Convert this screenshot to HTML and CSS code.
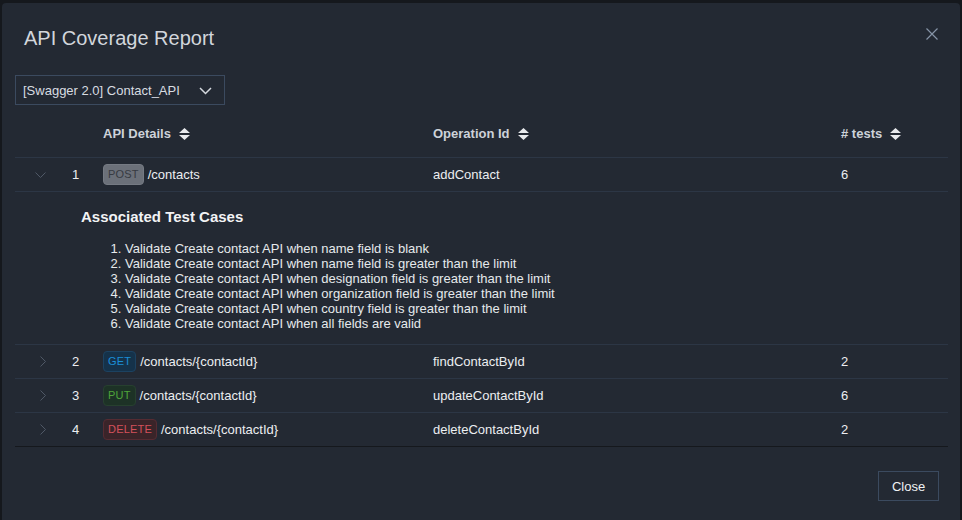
FILE: index.html
```html
<!DOCTYPE html>
<html>
<head>
<meta charset="utf-8">
<link rel="stylesheet" href="styles.css">
</head>
<body>
<div class="modal">
  <div class="modal-header">
    <h1 class="title">API Coverage Report</h1>
    <button class="x-btn" aria-label="close">
      <svg width="12" height="12" viewBox="0 0 12 12"><path d="M0.5 0.5L11.5 11.5M11.5 0.5L0.5 11.5" stroke="#8593a6" stroke-width="1.2" fill="none"/></svg>
    </button>
  </div>
  <div class="modal-body">
    <div class="select">
      <span>[Swagger 2.0] Contact_API</span>
      <svg class="select-chev" width="13" height="8" viewBox="0 0 13 8"><path d="M1 1L6.5 6.5L12 1" stroke="#d5d9df" stroke-width="1.5" fill="none"/></svg>
    </div>

    <div class="table">
      <div class="row head">
        <div class="c1"></div>
        <div class="c2"></div>
        <div class="c3"><span>API Details</span><svg class="sort" width="11" height="12" viewBox="0 0 11 12"><path d="M5.5 0L11 5H0Z M0 7H11L5.5 12Z" fill="#e8eaed"/></svg></div>
        <div class="c4"><span>Operation Id</span><svg class="sort" width="11" height="12" viewBox="0 0 11 12"><path d="M5.5 0L11 5H0Z M0 7H11L5.5 12Z" fill="#e8eaed"/></svg></div>
        <div class="c5"><span># tests</span><svg class="sort" width="11" height="12" viewBox="0 0 11 12"><path d="M5.5 0L11 5H0Z M0 7H11L5.5 12Z" fill="#e8eaed"/></svg></div>
      </div>

      <div class="row">
        <div class="c1"><svg width="11" height="6" viewBox="0 0 11 6"><path d="M0.5 0.5L5.5 5.5L10.5 0.5" stroke="#4f5866" stroke-width="1" fill="none"/></svg></div>
        <div class="c2">1</div>
        <div class="c3"><span class="badge post">POST</span><span>/contacts</span></div>
        <div class="c4">addContact</div>
        <div class="c5">6</div>
      </div>
      <div class="expanded">
        <h2>Associated Test Cases</h2>
        <ol>
          <li>Validate Create contact API when name field is blank</li>
          <li>Validate Create contact API when name field is greater than the limit</li>
          <li>Validate Create contact API when designation field is greater than the limit</li>
          <li>Validate Create contact API when organization field is greater than the limit</li>
          <li>Validate Create contact API when country field is greater than the limit</li>
          <li>Validate Create contact API when all fields are valid</li>
        </ol>
      </div>

      <div class="row">
        <div class="c1 closed"><svg width="6" height="11" viewBox="0 0 6 11"><path d="M0.5 0.5L5.5 5.5L0.5 10.5" stroke="#4f5866" stroke-width="1" fill="none"/></svg></div>
        <div class="c2">2</div>
        <div class="c3"><span class="badge get">GET</span><span>/contacts/{contactId}</span></div>
        <div class="c4">findContactById</div>
        <div class="c5">2</div>
      </div>
      <div class="row">
        <div class="c1 closed"><svg width="6" height="11" viewBox="0 0 6 11"><path d="M0.5 0.5L5.5 5.5L0.5 10.5" stroke="#4f5866" stroke-width="1" fill="none"/></svg></div>
        <div class="c2">3</div>
        <div class="c3"><span class="badge put">PUT</span><span>/contacts/{contactId}</span></div>
        <div class="c4">updateContactById</div>
        <div class="c5">6</div>
      </div>
      <div class="row last">
        <div class="c1 closed"><svg width="6" height="11" viewBox="0 0 6 11"><path d="M0.5 0.5L5.5 5.5L0.5 10.5" stroke="#4f5866" stroke-width="1" fill="none"/></svg></div>
        <div class="c2">4</div>
        <div class="c3"><span class="badge delete">DELETE</span><span>/contacts/{contactId}</span></div>
        <div class="c4">deleteContactById</div>
        <div class="c5">2</div>
      </div>
    </div>
  </div>
  <div class="modal-footer">
    <button class="close-btn">Close</button>
  </div>
</div>
</body>
</html>
```

FILE: styles.css
```css
* { box-sizing: border-box; }
html, body {
  margin: 0;
  padding: 0;
  background: #15181d;
  width: 962px;
  height: 520px;
  overflow: hidden;
  font-family: "Liberation Sans", Arial, sans-serif;
}
.modal {
  margin: 3px 0 0 2px;
  width: 958px;
  height: 517px;
  background: #232933;
  border-radius: 4px 4px 0 0;
  color: #e4e7eb;
}
.modal-header {
  display: flex;
  justify-content: space-between;
  align-items: flex-start;
  padding: 23px 22px 0 22px;
}
.title {
  margin: 0;
  font-size: 20px;
  line-height: 24px;
  font-weight: normal;
  color: #d2d6dc;
}
.x-btn {
  background: none;
  border: 0;
  padding: 0;
  margin-top: 2px;
  width: 12px;
  height: 12px;
  display: flex;
}
.modal-body {
  padding: 25px 12px 0 13px;
}
.select {
  width: 210px;
  height: 30px;
  border: 1px solid #3b4a5f;
  display: flex;
  align-items: center;
  justify-content: space-between;
  padding: 0 12px 0 7px;
  font-size: 13px;
  color: #d8dce1;
}
.select-chev { margin-top: 1px; }
.table {
  margin-top: 5px;
  font-size: 13px;
}
.row {
  display: grid;
  grid-template-columns: 52px 36px 330px 408px 1fr;
  height: 34px;
  align-items: center;
  border-bottom: 1px solid #2c3645;
  color: #eceef1;
}
.row.head {
  height: 48px;
  font-weight: bold;
  color: #cdd2d9;
}
.row.last { border-bottom-color: #15181d; }
.row > div { display: flex; align-items: center; }
.c1 { padding-left: 20px; }
.c1.closed { padding-left: 25px; }
.c2 { padding-left: 5px; }
.sort { margin-left: 8px; }
.badge {
  display: inline-block;
  font-size: 11px;
  line-height: 19px;
  padding: 0 4px;
  border: 1px solid transparent;
  border-radius: 4px;
  margin-right: 4px;
  letter-spacing: 0.2px;
}
.badge.post { background: #6b7079; border-color: #757a83; color: #373b42; }
.badge.get { background: #15324a; border-color: #1c4261; color: #1b8ed6; }
.badge.put { background: #1d3226; border-color: #27402f; color: #4fa53a; }
.badge.delete { background: #3a2429; border-color: #552b32; color: #d4515b; }
.expanded {
  padding: 16px 0 13px 66px;
  border-bottom: 1px solid #2c3645;
}
.expanded h2 {
  margin: 0;
  font-size: 15px;
  line-height: 18px;
  font-weight: bold;
  color: #f2f3f5;
}
.expanded ol {
  margin: 15px 0 0;
  padding-left: 44px;
  font-size: 13px;
  line-height: 15px;
  color: #e6e9ec;
}
.modal-footer {
  display: flex;
  justify-content: flex-end;
  padding: 24px 21px 0 0;
}
.close-btn {
  background: none;
  border: 1px solid #3b4a5f;
  height: 30px;
  width: 61px;
  padding: 0;
  font-family: "Liberation Sans", Arial, sans-serif;
  font-size: 13px;
  color: #f0f2f4;
}
```
